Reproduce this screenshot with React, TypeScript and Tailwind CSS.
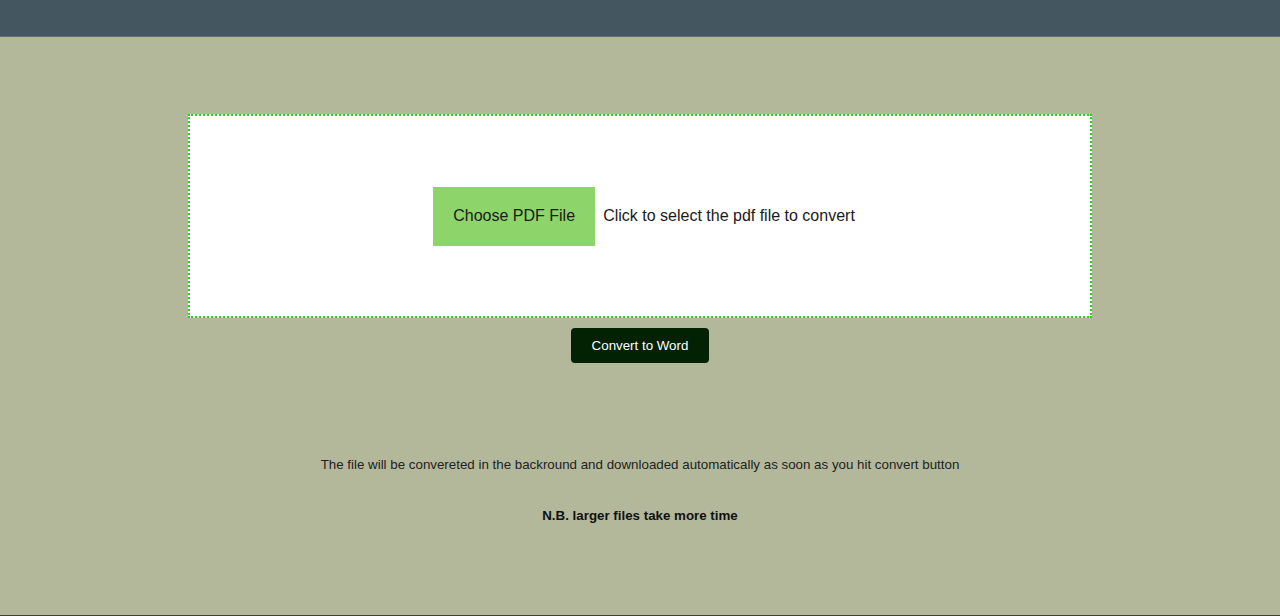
export default function App() {
    return (
        <div
            className="flex h-[616px] flex-col overflow-hidden bg-[#b3b89b]"
            style={{ fontFamily: '"Liberation Sans", Arial, sans-serif' }}
        >
            <header className="h-[37px] shrink-0 border-b border-[#5d6f78] bg-[#445760]" />

            <main className="flex flex-1 flex-col items-center">
                <section className="mt-[77px] flex h-[204px] w-[904px] items-center justify-center border-2 border-dotted border-[#22d41c] bg-white pl-[8px]">
                    <label className="flex items-center gap-2">
                        <span className="flex h-[59px] w-[162px] items-center justify-center bg-[#8dd46a] text-[16px] text-[#1a1a1a]">
                            Choose PDF File
                        </span>
                        <span className="text-[16px] text-[#1a1a1a]">
                            Click to select the pdf file to convert
                        </span>
                    </label>
                </section>

                <button className="mt-[10px] h-[35px] w-[138px] rounded-[4px] bg-[#032103] text-[13.33px] text-white">
                    Convert to Word
                </button>

                <p className="mt-[92px] text-[13.33px] text-[#222]">
                    The file will be convereted in the backround and downloaded
                    automatically as soon as you hit convert button
                </p>
                <p className="mt-[31px] text-[13.33px] font-bold text-[#111]">
                    N.B. larger files take more time
                </p>
            </main>

            <footer className="h-px shrink-0 bg-[#3d4230]" />
        </div>
    );
}
